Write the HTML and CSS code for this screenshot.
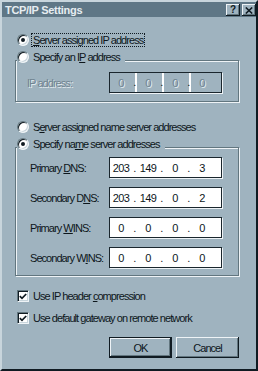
FILE: index.html
```html
<!DOCTYPE html>
<html>
<head>
<meta charset="utf-8">
<title>TCP/IP Settings</title>
<link rel="stylesheet" href="styles.css">
</head>
<body>
<div class="window">
  <div class="titlebar">
    <span class="title">TCP/IP Settings</span>
    <div class="tbtns">
      <span class="tbtn help">?</span>
      <span class="tbtn close"><svg width="8" height="7" viewBox="0 0 8 7"><path d="M0.8 0.5 L7.2 6.5 M7.2 0.5 L0.8 6.5" stroke="#101b22" stroke-width="1.6" fill="none"/></svg></span>
    </div>
  </div>
  <div class="content">
    <div class="row opt r1"><span class="radio checked"></span><span class="lbl focus"><u>S</u>erver assigned IP address</span></div>

    <div class="group g1">
      <div class="legend"><span class="radio"></span><span class="lbl">Specify an I<u>P</u> address</span></div>
      <div class="field-row">
        <span class="flabel disabled">IP address:</span>
        <div class="ipfield disabled"><span class="seg">0</span><span class="dot">.</span><span class="seg">0</span><span class="dot">.</span><span class="seg">0</span><span class="dot">.</span><span class="seg">0</span></div>
      </div>
    </div>

    <div class="row opt r3"><span class="radio"></span><span class="lbl">S<u>e</u>rver assigned name server addresses</span></div>

    <div class="group g2">
      <div class="legend"><span class="radio checked"></span><span class="lbl">Specify na<u>m</u>e server addresses</span></div>
      <div class="field-row">
        <span class="flabel">Primary <u>D</u>NS:</span>
        <div class="ipfield"><span class="seg">203</span><span class="dot">.</span><span class="seg">149</span><span class="dot">.</span><span class="seg">0</span><span class="dot">.</span><span class="seg">3</span></div>
      </div>
      <div class="field-row">
        <span class="flabel">Secondary D<u>N</u>S:</span>
        <div class="ipfield"><span class="seg">203</span><span class="dot">.</span><span class="seg">149</span><span class="dot">.</span><span class="seg">0</span><span class="dot">.</span><span class="seg">2</span></div>
      </div>
      <div class="field-row">
        <span class="flabel">Primary <u>W</u>INS:</span>
        <div class="ipfield"><span class="seg">0</span><span class="dot">.</span><span class="seg">0</span><span class="dot">.</span><span class="seg">0</span><span class="dot">.</span><span class="seg">0</span></div>
      </div>
      <div class="field-row">
        <span class="flabel">Secondary W<u>I</u>NS:</span>
        <div class="ipfield"><span class="seg">0</span><span class="dot">.</span><span class="seg">0</span><span class="dot">.</span><span class="seg">0</span><span class="dot">.</span><span class="seg">0</span></div>
      </div>
    </div>

    <div class="row opt c1"><span class="check"><svg width="8" height="7" viewBox="0 0 8 7"><path d="M0.8 3.2 L3 5.4 L7.2 1" stroke="#101b22" stroke-width="1.7" fill="none"/></svg></span><span class="lbl">Use IP header <u>c</u>ompression</span></div>
    <div class="row opt c2"><span class="check"><svg width="8" height="7" viewBox="0 0 8 7"><path d="M0.8 3.2 L3 5.4 L7.2 1" stroke="#101b22" stroke-width="1.7" fill="none"/></svg></span><span class="lbl">Use default gateway on remote network</span></div>

    <div class="buttons">
      <span class="btn default">OK</span>
      <span class="btn">Cancel</span>
    </div>
  </div>
</div>
</body>
</html>
```
FILE: styles.css
```css
* { box-sizing: border-box; }
html, body { margin: 0; padding: 0; }
body {
  background: #9fb3bf;
  font-family: "Liberation Sans", Arial, sans-serif;
  font-size: 11px;
  letter-spacing: -0.95px;
  color: #0d161b;
}
.window {
  width: 258px;
  height: 371px;
  background: #9fb3bf;
  border: 2px solid;
  border-color: #c8d5dc #101b22 #101b22 #c8d5dc;
  display: flex;
  flex-direction: column;
}
.titlebar {
  height: 15px;
  flex: none;
  background: #5f7786;
  display: flex;
  align-items: center;
  padding: 0 0 0 3px;
}
.title {
  color: #e6edf1;
  font-weight: bold;
  font-size: 11px;
  letter-spacing: -0.3px;
}
.tbtns {
  margin-left: auto;
  align-self: flex-start;
  margin-top: 2px;
  display: flex;
  gap: 2px;
}
.tbtn {
  width: 14px;
  height: 12px;
  background: #9fb3bf;
  box-shadow: inset -1px -1px 0 #101b22, inset 1px 1px 0 #eef3f6, inset -2px -2px 0 #62767f;
  display: flex;
  align-items: center;
  justify-content: center;
  font-weight: bold;
  font-size: 10px;
  letter-spacing: 0;
  line-height: 1;
  color: #101b22;
}
.content {
  padding: 16px 17px 0 13px;
  display: flex;
  flex-direction: column;
}
.row {
  display: flex;
  align-items: center;
  height: 14px;
}
.opt { padding-left: 2px; }
.r3 { margin-top: 18px; }
.c1 { margin-top: 13px; }
.c2 { margin-top: 8px; }
.radio {
  width: 12px;
  height: 12px;
  flex: none;
  border-radius: 50%;
  background: #fff;
  border: 1px solid;
  border-color: #62767f #eef3f6 #eef3f6 #62767f;
  box-shadow: inset 1px 1px 0 #101b22, inset -1px -1px 0 #c8d5dc;
  position: relative;
}
.radio.checked::after {
  content: "";
  position: absolute;
  left: 3px;
  top: 3px;
  width: 4px;
  height: 4px;
  border-radius: 50%;
  background: #101b22;
}
.check {
  width: 12px;
  height: 12px;
  flex: none;
  background: #fff;
  border: 1px solid;
  border-color: #62767f #eef3f6 #eef3f6 #62767f;
  box-shadow: inset 1px 1px 0 #101b22, inset -1px -1px 0 #c8d5dc;
  display: flex;
  align-items: center;
  justify-content: center;
}
.lbl {
  margin-left: 2px;
  padding: 0 1px;
  border: 1px solid transparent;
  line-height: 12px;
  white-space: nowrap;
}
.lbl.focus { border: 1px dotted #101b22; }
u { text-decoration: underline; text-underline-offset: 1px; }
.group {
  border: 1px solid #62767f;
  box-shadow: inset 1px 1px 0 #eef3f6, 1px 1px 0 #eef3f6;
  display: flex;
  flex-direction: column;
}
.g1 { margin-top: 13px; padding: 0 0 8px 11px; }
.g2 { margin-top: 13px; padding: 0 0 7px 14px; gap: 9px; }
.legend {
  display: flex;
  align-items: center;
  height: 14px;
  margin-top: -11px;
  background: #9fb3bf;
  width: fit-content;
  padding-right: 3px;
}
.g1 .legend { margin-left: -10px; }
.g2 .legend { margin-left: -13px; margin-bottom: -3px; }
.field-row {
  display: flex;
  align-items: center;
}
.g1 .field-row { margin-top: 8px; }
.flabel { width: 82px; white-space: nowrap; }
.g2 .flabel { width: 79px; }
.flabel.disabled { color: #6f8390; text-shadow: 1px 1px 0 #e3ebef; }
.ipfield {
  width: 113px;
  height: 21px;
  display: flex;
  align-items: center;
  background: #fff;
  border: 1px solid #1a262d;
  box-shadow: 1px 1px 0 #eef3f6;
  padding-left: 1px;
  letter-spacing: -0.6px;
}
.seg { width: 20px; text-align: center; }
.dot { width: 7px; text-align: center; }
.ipfield.disabled { background: #9fb3bf; color: #6f8390; }
.ipfield.disabled .seg { text-shadow: 1px 1px 0 #e3ebef; }
.ipfield.disabled .dot {
  align-self: stretch;
  display: flex;
  align-items: flex-end;
  justify-content: center;
  padding-bottom: 4px;
  color: #101b22;
  background: linear-gradient(to right, transparent 4px, #fff 4px, #fff 6px, transparent 6px);
}
.buttons {
  margin-top: 12px;
  display: flex;
  justify-content: flex-end;
  gap: 4px;
}
.btn {
  width: 63px;
  height: 21px;
  display: flex;
  align-items: center;
  justify-content: center;
  background: #9fb3bf;
  box-shadow: inset -1px -1px 0 #101b22, inset 1px 1px 0 #eef3f6, inset -2px -2px 0 #62767f;
}
.btn.default {
  border: 1px solid #101b22;
  box-shadow: inset -1px -1px 0 #101b22, inset 1px 1px 0 #eef3f6, inset -2px -2px 0 #62767f;
}
```
